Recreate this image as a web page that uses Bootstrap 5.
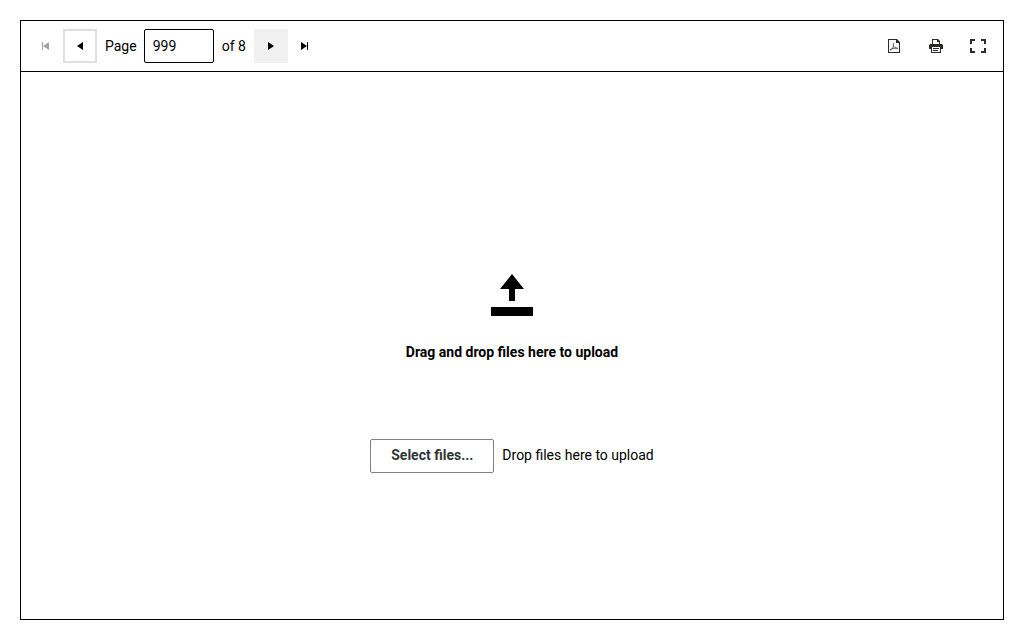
<!DOCTYPE html>
<html lang="en">
<head>
<meta charset="utf-8">
<meta name="viewport" content="width=device-width, initial-scale=1">
<title>PDF Viewer</title>
<link href="https://cdn.jsdelivr.net/npm/bootstrap@5.3.0/dist/css/bootstrap.min.css" rel="stylesheet">
<style>
body { font-family: Roboto, "Liberation Sans", sans-serif; font-size: 14px; line-height: 20px; color: #000; padding: 20px; }
.viewer { min-height: calc(100vh - 40px); border: 1px solid #000; }
.viewer-toolbar { border-bottom: 1px solid #000; }
.tool { --bs-btn-padding-x: 0; --bs-btn-padding-y: 0; --bs-btn-border-radius: 0; --bs-btn-border-width: 0; --bs-btn-color: #000; --bs-btn-disabled-opacity: 1; --bs-btn-disabled-color: #a2a2a0; width: 34px; height: 34px; }
.tool-focused { box-shadow: inset 0 0 0 2px #dedede; }
.tool-hovered { background: #f0f0f0; }
.tool-dark { --bs-btn-color: #2a2a28; }
.page-label { margin: 0 7px 0 8px; }
.page-input { width: 70px; height: 34px; padding: 0 8px; font-size: 14px; color: #000; border: 1px solid #000; border-radius: 2px; }
.upload-area { padding-top: 53px; }
.select-btn { --bs-btn-font-size: 14px; --bs-btn-line-height: 20px; --bs-btn-border-radius: 2px; --bs-btn-border-color: #80807e; --bs-btn-color: #313536; --bs-btn-font-weight: 700; padding: 5px 20px 7px; }
.upload-row { margin-top: 77px; }
.upload-title { margin-top: 23px; }
svg { fill: currentColor; display: block; }
</style>
</head>
<body>
<main class="viewer d-flex flex-column">
  <div class="viewer-toolbar d-flex flex-wrap align-items-center justify-content-between p-2" role="toolbar" aria-label="Document tools">
    <div class="d-flex align-items-center">
      <button type="button" class="btn tool d-flex align-items-center justify-content-center" aria-label="First page" disabled>
        <svg width="16" height="16" viewBox="0 0 16 16"><path d="M4 4h1v8H4zM5 8l6-4v8z"/></svg>
      </button>
      <button type="button" class="btn tool tool-focused d-flex align-items-center justify-content-center" aria-label="Previous page">
        <svg width="16" height="16" viewBox="0 0 16 16"><path d="M5 8l6-4v8z"/></svg>
      </button>
      <label for="page" class="page-label">Page</label>
      <input id="page" class="form-control page-input" type="text" inputmode="numeric" value="999">
      <span class="mx-2">of 8</span>
      <button type="button" class="btn tool tool-hovered d-flex align-items-center justify-content-center" aria-label="Next page">
        <svg width="16" height="16" viewBox="0 0 16 16"><path d="M5 4l6 4-6 4z"/></svg>
      </button>
      <button type="button" class="btn tool d-flex align-items-center justify-content-center" aria-label="Last page">
        <svg width="16" height="16" viewBox="0 0 16 16"><path d="M4 4l6 4-6 4zM10 4h1v8h-1z"/></svg>
      </button>
    </div>
    <div class="d-flex align-items-center gap-2">
      <button type="button" class="btn tool tool-dark d-flex align-items-center justify-content-center" aria-label="Export to PDF">
        <svg width="16" height="16" viewBox="0 0 16 16"><path fill-rule="evenodd" d="M2 1h9l3 3v11H2zM3 2v12h10V5h-3V2z"/><path d="M7.400 5v2.500c0 1-.7 2.700-1.700 3.700C5 11.900 4.300 12.400 4 12M7.400 7.500c.4 1.500 1.700 2.600 4.300 2.900M4 11.700c1.500-1.200 4-1.700 7.700-1.500" fill="none" stroke="currentColor" stroke-width=".7"/></svg>
      </button>
      <button type="button" class="btn tool tool-dark d-flex align-items-center justify-content-center" aria-label="Print">
        <svg width="16" height="16" viewBox="0 0 16 16"><path fill-rule="evenodd" d="M4 1h6l2 2v3H4zM5 2v4h6V4H9V2z"/><path fill-rule="evenodd" d="M2 6h12l1 1v4h-2v4H3v-4H1V7zM4 9v5h8V9z"/><path d="M5 10h6v1H5zM5 12h5v1H5z"/></svg>
      </button>
      <button type="button" class="btn tool tool-dark d-flex align-items-center justify-content-center" aria-label="Full screen">
        <svg width="16" height="16" viewBox="0 0 16 16"><path d="M0 1h5v2H2v3H0zM11 1h5v5h-2V3h-3zM0 10h2v3h3v2H0zM14 10h2v5h-5v-2h3z"/></svg>
      </button>
    </div>
  </div>
  <section class="upload-area flex-grow-1 d-flex flex-column align-items-center justify-content-center">
    <svg width="48" height="48" viewBox="0 0 48 48" aria-hidden="true"><path d="M24 3l12 15h-9v12h-6V18h-9zM3 36h42v9H3z"/></svg>
    <div class="upload-title fw-bold">Drag and drop files here to upload</div>
    <div class="upload-row d-flex flex-wrap align-items-baseline justify-content-center gap-2">
      <button type="button" class="btn select-btn">Select files...</button>
      <span>Drop files here to upload</span>
    </div>
  </section>
</main>
<script src="https://cdn.jsdelivr.net/npm/bootstrap@5.3.0/dist/js/bootstrap.bundle.min.js"></script>
</body>
</html>
